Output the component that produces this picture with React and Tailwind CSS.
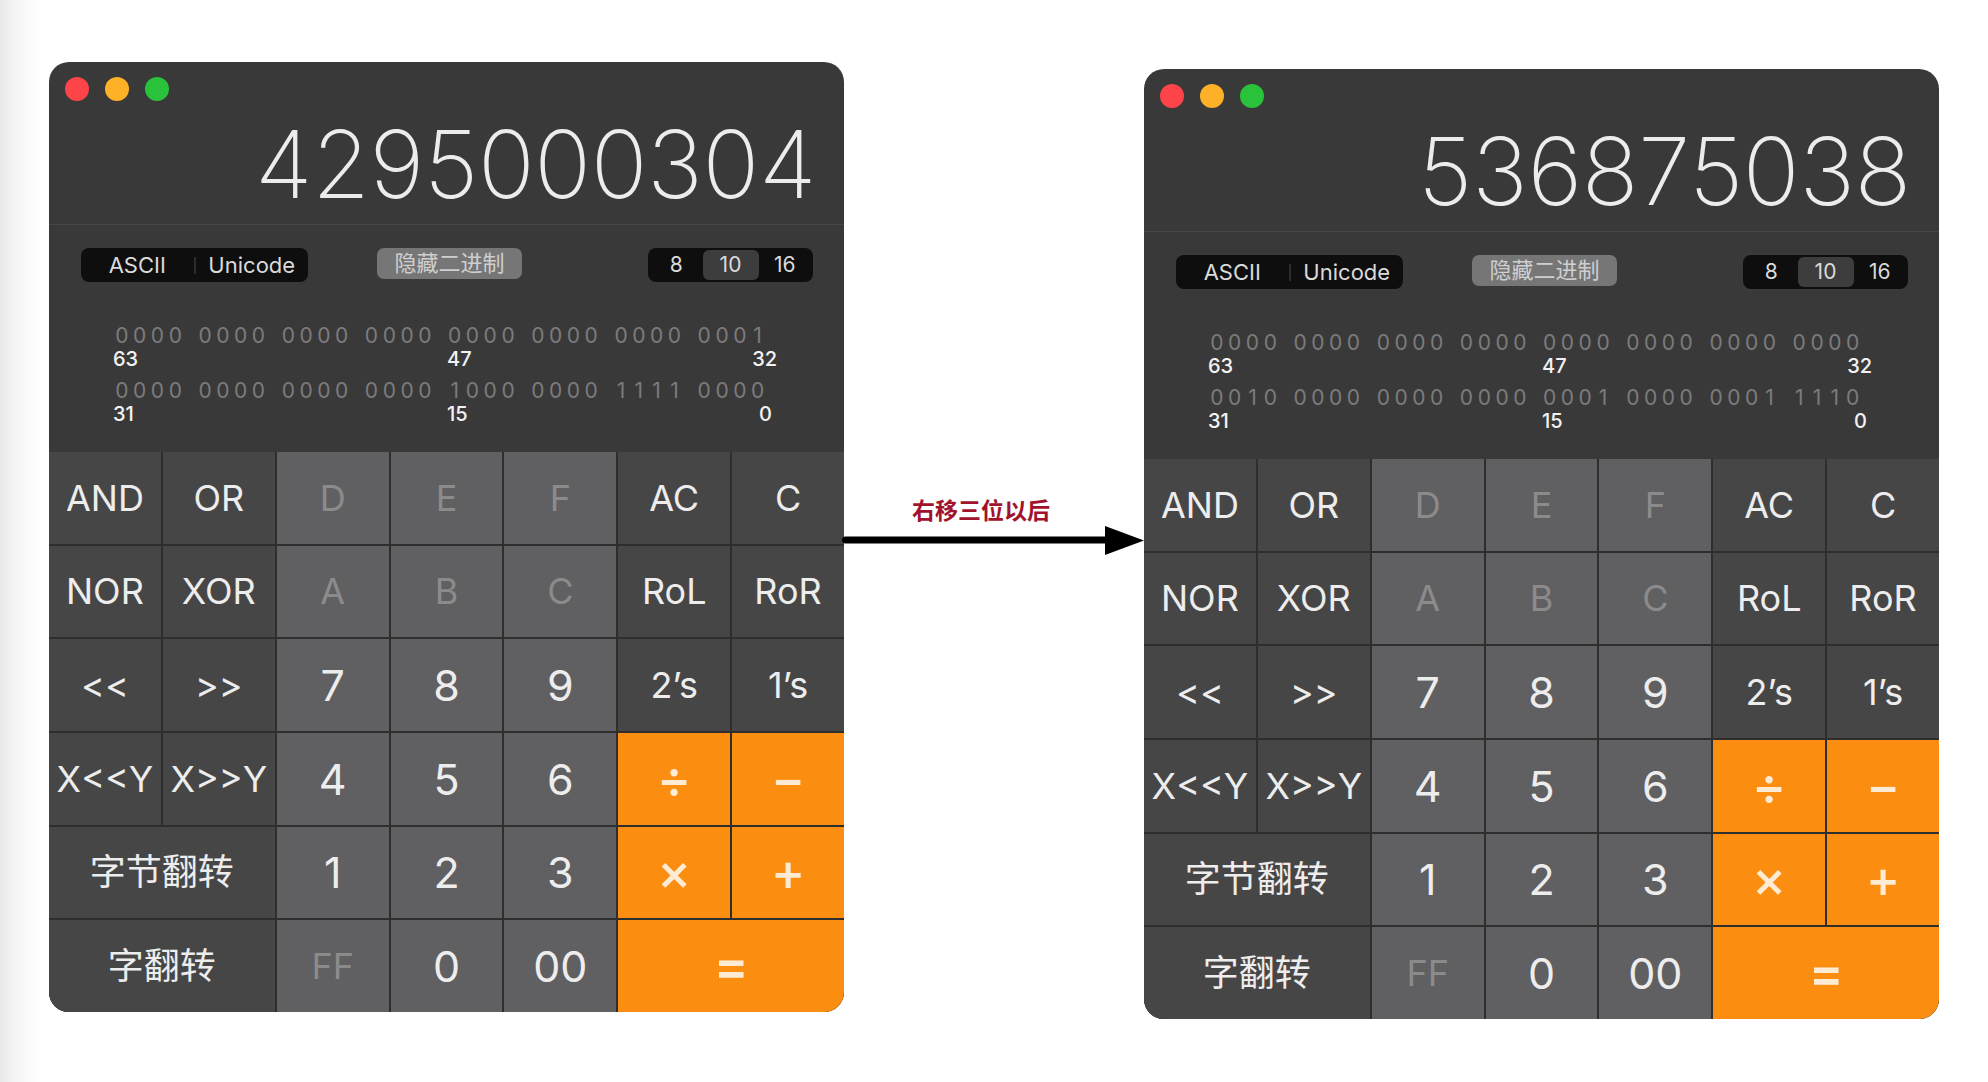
const KEYS = [
  ['AND', 'fn'], ['OR', 'fn'], ['D', 'hex'], ['E', 'hex'], ['F', 'hex'], ['AC', 'fn'], ['C', 'fn'],
  ['NOR', 'fn'], ['XOR', 'fn'], ['A', 'hex'], ['B', 'hex'], ['C', 'hex'], ['RoL', 'fn'], ['RoR', 'fn'],
  ['<<', 'fn'], ['>>', 'fn'], ['7', 'num'], ['8', 'num'], ['9', 'num'], ['2’s', 'fn'], ['1’s', 'fn'],
  ['X<<Y', 'fn'], ['X>>Y', 'fn'], ['4', 'num'], ['5', 'num'], ['6', 'num'], ['÷', 'op'], ['−', 'op'],
  ['字节翻转', 'cjk'], ['1', 'num'], ['2', 'num'], ['3', 'num'], ['×', 'op'], ['+', 'op'],
  ['字翻转', 'cjk'], ['FF', 'hex'], ['0', 'num'], ['00', 'num'], ['=', 'opw'],
];

const KEY_STYLE = {
  fn: 'bg-[#474647] text-[#ededed] text-[36px]',
  hex: 'bg-[#605f61] text-[#8c8b8c] text-[36px]',
  num: 'bg-[#605f61] text-[#ededed] text-[43px]',
  op: 'bg-[#fb8e10] text-[#fdebd3] text-[52px] font-medium',
  opw: 'col-span-2 bg-[#fb8e10] text-[#fdebd3] text-[52px] font-semibold',
  cjk: 'col-span-2 bg-[#474647] text-[#ededed] text-[36px]',
};

function BitRow({ bits, className = '' }) {
  return (
    <div className={`flex gap-[12px] h-[21px] text-[21px] leading-[21px] text-[#7c7b7c] ${className}`}>
      {bits.split(' ').map((group, i) => (
        <div key={i} className="flex">
          {group.split('').map((d, j) => (
            <span key={j} className="w-[17.8px] text-center">{d}</span>
          ))}
        </div>
      ))}
    </div>
  );
}

function BitLabels({ left, mid, right, className = '' }) {
  return (
    <div className={`flex w-[664px] h-[20px] text-[20px] leading-[20px] font-medium text-[#f2f2f2] ${className}`}>
      <span className="w-[334px]">{left}</span>
      <span className="flex-1">{mid}</span>
      <span>{right}</span>
    </div>
  );
}

function CalcWindow({ value, hi, lo, className = '' }) {
  return (
    <div className={`w-[795px] h-[950px] shrink-0 flex flex-col rounded-[20px] overflow-hidden bg-[#3a393a] ${className}`}>
      {/* traffic lights */}
      <div className="h-[55px] flex gap-[16px] pl-[16px] pt-[15px]">
        <span className="w-[24px] h-[24px] rounded-full bg-[#fd4549]" />
        <span className="w-[24px] h-[24px] rounded-full bg-[#fdb126]" />
        <span className="w-[24px] h-[24px] rounded-full bg-[#2bc23b]" />
      </div>

      {/* display */}
      <div className="h-[94px] pr-[28px] text-right text-[94px] leading-none font-extralight tracking-[-0.4px] text-[#ececec]">
        {value}
      </div>
      <div className="mt-[13px] h-px bg-[#484748]" />

      {/* controls */}
      <div className="mt-[23px] h-[34px] flex items-start pl-[32px]">
        <div className="w-[227px] h-[34px] flex items-center rounded-[8px] bg-[#0e0e0e] text-[22px] text-[#dadada]">
          <span className="flex-1 text-center">ASCII</span>
          <span className="w-[2px] h-[17px] bg-[#2c2c2c]" />
          <span className="flex-1 text-center">Unicode</span>
        </div>
        <div className="ml-[69px] w-[145px] h-[31px] flex items-center justify-center rounded-[7px] bg-[#777677] text-[22px] text-[#cfcfcf]">
          隐藏二进制
        </div>
        <div className="ml-[126px] w-[165px] h-[34px] flex items-center p-[2px] rounded-[8px] bg-[#0e0e0e] text-[21px] text-[#dadada]">
          <span className="flex-1 text-center">8</span>
          <span className="w-[56px] h-[30px] flex items-center justify-center rounded-[6px] bg-[#3e3d3e]">10</span>
          <span className="flex-1 text-center">16</span>
        </div>
      </div>

      {/* binary view */}
      <div className="mt-[43px] pl-[64px]">
        <BitRow bits={hi} />
        <BitLabels left="63" mid="47" right="32" className="mt-[3px]" />
        <BitRow bits={lo} className="mt-[11px]" />
        <BitLabels left="31" mid="15" right="0" className="mt-[3px] pr-[5px]" />
      </div>

      {/* keypad */}
      <div className="mt-auto h-[560px] grid grid-cols-7 grid-rows-6 gap-[2px] bg-[#2f2e2f]">
        {KEYS.map(([label, kind], i) => (
          <div key={i} className={`flex items-center justify-center ${KEY_STYLE[kind]}`}>
            {label}
          </div>
        ))}
      </div>
    </div>
  );
}

export default function App() {
  return (
    <div className="w-[1988px] h-[1082px] overflow-hidden flex items-start pl-[49px] pt-[62px] bg-[linear-gradient(to_right,#e9e9e9,#f5f5f5_16px,#ffffff_40px)] font-['Inter','Noto_Sans_CJK_SC',sans-serif]">
      <CalcWindow
        value="4295000304"
        hi="0000 0000 0000 0000 0000 0000 0000 0001"
        lo="0000 0000 0000 0000 1000 0000 1111 0000"
      />

      {/* annotation arrow */}
      <div className="w-[300px] shrink-0 flex flex-col mt-[436px]">
        <div className="pl-[68px] text-[23px] leading-[23px] font-bold text-[#a1122c] font-['Noto_Sans_CJK_SC',sans-serif]">
          右移三位以后
        </div>
        <svg className="-ml-[3px] mt-[3px]" width="304" height="32" viewBox="0 0 304 32">
          <line x1="4.5" y1="16" x2="266" y2="16" stroke="#000" strokeWidth="7" strokeLinecap="round" />
          <polygon points="264,2 303,16.5 264,31" fill="#000" />
        </svg>
      </div>

      <CalcWindow
        className="mt-[7px]"
        value="536875038"
        hi="0000 0000 0000 0000 0000 0000 0000 0000"
        lo="0010 0000 0000 0000 0001 0000 0001 1110"
      />
    </div>
  );
}
